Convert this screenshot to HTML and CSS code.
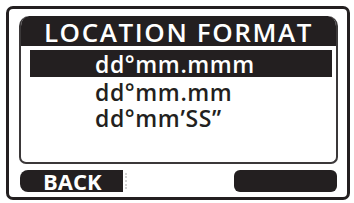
FILE: index.html
```html
<!DOCTYPE html>
<html lang="en">

<head>
    <meta charset="UTF-8">
    <meta name="viewport" content="width=device-width, initial-scale=1.0">
    <title>Location Format</title>
    <link rel="stylesheet" href="styles.css">
</head>

<body>

    <div class="frame">
        <div class="panel">
            <div class="title">LOCATION FORMAT</div>
            <ul class="options">
                <li class="option selected">dd°mm.mmm</li>
                <li class="option">dd°mm.mm</li>
                <li class="option">dd°mm’SS”</li>
            </ul>
        </div>
        <div class="softkeys">
            <div class="key back">BACK</div>
            <div class="gap"><span class="ghost"></span></div>
            <div class="key blank"></div>
        </div>
    </div>

</body>

</html>
```

FILE: styles.css
```css
* {
    margin: 0;
    padding: 0;
    box-sizing: border-box;
}

body {
    background-color: #fff;
    font-family: "Open Sans", "DejaVu Sans", sans-serif;
    color: #231f20;
}

.frame {
    width: 344px;
    height: 194px;
    margin: 6px 0 0 6px;
    border: 3px solid #231f20;
    border-radius: 7px;
    padding: 7px 9px 0 10px;
}

.panel {
    width: 319px;
    height: 148px;
    border: 2px solid #3b3839;
    border-top: none;
    border-radius: 10px 10px 7px 7px;
    overflow: hidden;
}

.panel .title {
    height: 30px;
    margin: 0 -2px;
    background-color: #231f20;
    border-radius: 10px 10px 0 0;
    color: #fff;
    font-size: 26px;
    font-weight: 600;
    line-height: 28px;
    padding-top: 2px;
    text-align: center;
    letter-spacing: 1.6px;
    white-space: nowrap;
}

.options {
    list-style: none;
    padding: 4px 4px 0 9px;
}

.option {
    font-size: 23px;
    font-weight: 600;
    line-height: 25.5px;
    padding-left: 65px;
    letter-spacing: 0.6px;
}

.option.selected {
    background-color: #231f20;
    color: #fff;
    height: 27px;
    line-height: 25px;
    padding-top: 2px;
    margin-bottom: 3px;
}

.softkeys {
    display: flex;
    margin-top: 6px;
    height: 22px;
}

.key {
    width: 103px;
    height: 22px;
    background-color: #231f20;
    color: #fff;
}

.key.back {
    margin-left: 1px;
    border-radius: 8px 0 0 8px;
    font-size: 22px;
    font-weight: 700;
    line-height: 22px;
    padding-left: 23px;
}

.gap {
    flex: 1;
    padding: 3px 0 0 2px;
}

.ghost {
    display: block;
    width: 2px;
    height: 16px;
    border-left: 2px dotted #d4d4d4;
}

.key.blank {
    border-radius: 6px;
    margin-right: 1px;
}
```
